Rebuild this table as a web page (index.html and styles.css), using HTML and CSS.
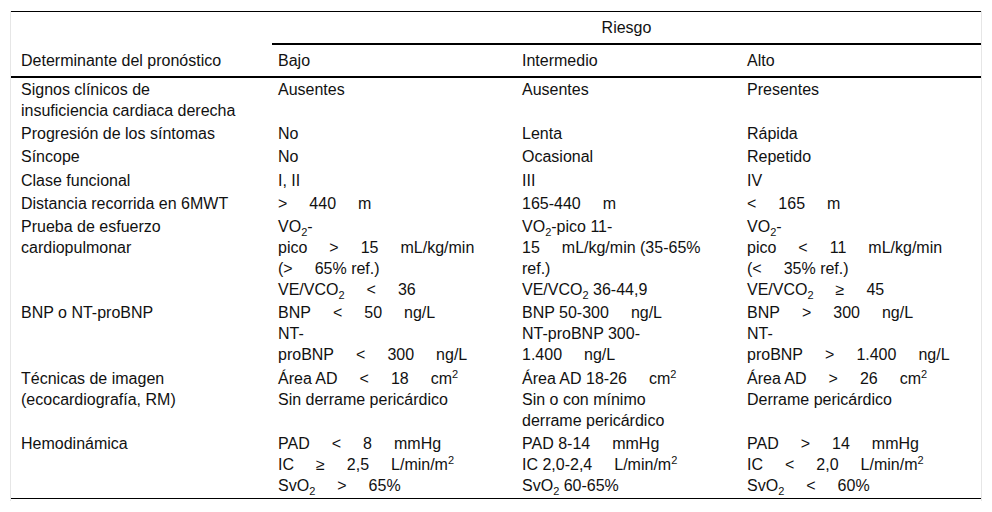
FILE: index.html
```html
<!DOCTYPE html>
<html lang="es">
<head>
<meta charset="utf-8">
<link rel="stylesheet" href="styles.css">
</head>
<body>
<div class="frame">
<table class="risk">
<colgroup>
<col class="c1"><col class="c2"><col class="c3"><col class="c4">
</colgroup>
<thead>
<tr>
<th rowspan="2" class="hmain">Determinante del pronóstico</th>
<th colspan="3" class="hgroup">Riesgo</th>
</tr>
<tr>
<th class="hsub">Bajo</th>
<th class="hsub">Intermedio</th>
<th class="hsub">Alto</th>
</tr>
</thead>
<tbody>
<tr>
<td>Signos clínicos de<br>insuficiencia cardiaca derecha</td>
<td>Ausentes</td>
<td>Ausentes</td>
<td>Presentes</td>
</tr>
<tr>
<td>Progresión de los síntomas</td>
<td>No</td>
<td>Lenta</td>
<td>Rápida</td>
</tr>
<tr>
<td>Síncope</td>
<td>No</td>
<td>Ocasional</td>
<td>Repetido</td>
</tr>
<tr>
<td>Clase funcional</td>
<td>I, II</td>
<td>III</td>
<td>IV</td>
</tr>
<tr>
<td>Distancia recorrida en 6MWT</td>
<td>&gt;<span class="g"></span>440<span class="g"></span>m</td>
<td>165-440<span class="g"></span>m</td>
<td>&lt;<span class="g"></span>165<span class="g"></span>m</td>
</tr>
<tr>
<td>Prueba de esfuerzo<br>cardiopulmonar</td>
<td>VO<sub>2</sub>-<br>pico<span class="g"></span>&gt;<span class="g"></span>15<span class="g"></span>mL/kg/min<br>(&gt;<span class="g"></span>65% ref.)<br>VE/VCO<sub>2</sub><span class="g"></span>&lt;<span class="g"></span>36</td>
<td>VO<sub>2</sub>-pico 11-<br>15<span class="g"></span>mL/kg/min (35-65%<br>ref.)<br>VE/VCO<sub>2</sub> 36-44,9</td>
<td>VO<sub>2</sub>-<br>pico<span class="g"></span>&lt;<span class="g"></span>11<span class="g"></span>mL/kg/min<br>(&lt;<span class="g"></span>35% ref.)<br>VE/VCO<sub>2</sub><span class="g"></span>≥<span class="g"></span>45</td>
</tr>
<tr>
<td>BNP o NT-proBNP</td>
<td>BNP<span class="g"></span>&lt;<span class="g"></span>50<span class="g"></span>ng/L<br>NT-<br>proBNP<span class="g"></span>&lt;<span class="g"></span>300<span class="g"></span>ng/L</td>
<td>BNP 50-300<span class="g"></span>ng/L<br>NT-proBNP 300-<br>1.400<span class="g"></span>ng/L</td>
<td>BNP<span class="g"></span>&gt;<span class="g"></span>300<span class="g"></span>ng/L<br>NT-<br>proBNP<span class="g"></span>&gt;<span class="g"></span>1.400<span class="g"></span>ng/L</td>
</tr>
<tr>
<td>Técnicas de imagen<br>(ecocardiografía, RM)</td>
<td>Área AD<span class="g"></span>&lt;<span class="g"></span>18<span class="g"></span>cm<sup>2</sup><br>Sin derrame pericárdico</td>
<td>Área AD 18-26<span class="g"></span>cm<sup>2</sup><br>Sin o con mínimo<br>derrame pericárdico</td>
<td>Área AD<span class="g"></span>&gt;<span class="g"></span>26<span class="g"></span>cm<sup>2</sup><br>Derrame pericárdico</td>
</tr>
<tr>
<td>Hemodinámica</td>
<td>PAD<span class="g"></span>&lt;<span class="g"></span>8<span class="g"></span>mmHg<br>IC<span class="g"></span>≥<span class="g"></span>2,5<span class="g"></span>L/min/m<sup>2</sup><br>SvO<sub>2</sub><span class="g"></span>&gt;<span class="g"></span>65%</td>
<td>PAD 8-14<span class="g"></span>mmHg<br>IC 2,0-2,4<span class="g"></span>L/min/m<sup>2</sup><br>SvO<sub>2</sub> 60-65%</td>
<td>PAD<span class="g"></span>&gt;<span class="g"></span>14<span class="g"></span>mmHg<br>IC<span class="g"></span>&lt;<span class="g"></span>2,0<span class="g"></span>L/min/m<sup>2</sup><br>SvO<sub>2</sub><span class="g"></span>&lt;<span class="g"></span>60%</td>
</tr>
</tbody>
</table>
</div>
</body>
</html>
```

FILE: styles.css
```css
html, body {
  margin: 0;
  padding: 0;
  background: #ffffff;
}

body {
  font-family: "Liberation Sans", Arial, sans-serif;
  font-size: 16px;
  color: #111111;
}

.frame {
  margin: 11px 0 0 10px;
  width: 970px;
  border-left: 1px solid #e6e6e6;
  border-right: 1px solid #e6e6e6;
  padding-bottom: 2px;
}

.risk {
  width: 970px;
  table-layout: fixed;
  border-collapse: separate;
  border-spacing: 0;
  border-top: 1px solid #000;
  border-bottom: 1px solid #000;
  line-height: 21px;
}

.c1 { width: 261px; }
.c2 { width: 244px; }
.c3 { width: 225px; }
.c4 { width: 240px; }

.risk th {
  font-weight: normal;
  text-align: left;
  padding: 5px 6px;
  vertical-align: bottom;
}

.risk th.hmain {
  padding-left: 10px;
  border-bottom: 2px solid #000;
}

.risk th.hgroup {
  text-align: center;
  border-bottom: 2px solid #000;
}

.risk th.hsub {
  border-bottom: 2px solid #000;
}

.risk td {
  padding: 0.6px 6px 1.73px;
  vertical-align: top;
  white-space: nowrap;
}

.risk td:first-child {
  padding-left: 10px;
}

.g {
  display: inline-block;
  width: 22px;
}

sub, sup {
  font-size: 11px;
  line-height: 0;
}

sub {
  vertical-align: -4px;
}

sup {
  vertical-align: 6px;
}
```
